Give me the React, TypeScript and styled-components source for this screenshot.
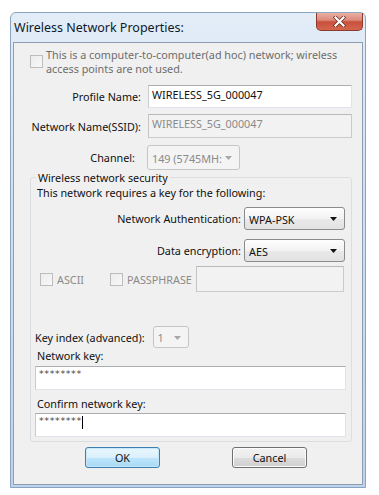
import React from 'react'
import styled, { createGlobalStyle } from 'styled-components'

const GlobalStyle = createGlobalStyle`
  html, body {
    margin: 0;
    padding: 0;
    background: #ffffff;
  }
  body {
    font-family: 'Noto Sans', 'Open Sans', sans-serif;
    font-size: 10.8px;
    color: #111;
  }
`

const Window = styled.div`
  margin: 12px 0 0 10px;
  width: 356px;
  height: 476px;
  box-sizing: border-box;
  border: 1px solid #8aa3bf;
  border-radius: 6px 6px 0 0;
  background: linear-gradient(180deg, #e3edf8 0%, #cfe0f2 40%, #bfd4ec 100%);
  padding: 0 2px 2px 2px;
  display: flex;
  flex-direction: column;
`

const TitleBar = styled.div`
  height: 29px;
  display: flex;
  justify-content: space-between;
  align-items: flex-start;
`

const Title = styled.div`
  align-self: center;
  padding-left: 1px;
  font-size: 12.5px;
  color: #0e1a2a;
`

const CloseButton = styled.div`
  width: 47px;
  height: 18px;
  box-sizing: border-box;
  border: 1px solid #8a3a2e;
  border-top: none;
  border-radius: 0 0 5px 5px;
  background: linear-gradient(180deg, #eab0a4 0%, #dc8a7a 42%, #c9503c 52%, #d4664e 100%);
  display: flex;
  align-items: center;
  justify-content: center;
`

const Client = styled.div`
  flex: 1;
  border: 1px solid #8d9db2;
  background: #f0f0f0;
  display: flex;
  flex-direction: column;
`

const AdHocRow = styled.div`
  margin-top: 5px;
  padding-left: 16px;
  display: flex;
  align-items: flex-start;
  gap: 3px;
  color: #6d6d6d;
  line-height: 14px;
`

const Check = styled.span<{ $top?: number }>`
  display: inline-block;
  flex: none;
  width: 13px;
  height: 13px;
  box-sizing: border-box;
  margin-top: ${(p) => p.$top ?? 0}px;
  border: 1px solid #bcbcbc;
  background: linear-gradient(135deg, #ececec, #f8f8f8);
`

const FieldRow = styled.div<{ $top: number; $gap: number }>`
  margin-top: ${(p) => p.$top}px;
  display: flex;
  align-items: center;
  gap: ${(p) => p.$gap}px;
`

const Label = styled.div<{ $width: number }>`
  width: ${(p) => p.$width}px;
  text-align: right;
  white-space: nowrap;
  flex: none;
`

const TextBox = styled.div<{ $width: number; $height: number; $disabled?: boolean }>`
  width: ${(p) => p.$width}px;
  height: ${(p) => p.$height}px;
  box-sizing: border-box;
  flex: none;
  border: 1px solid ${(p) => (p.$disabled ? '#c9cbcf' : '#e2e3ea')};
  border-top-color: ${(p) => (p.$disabled ? '#b7b9bd' : '#abadb3')};
  border-left-color: ${(p) => (p.$disabled ? '#c3c5c9' : '#c8cad0')};
  background: ${(p) => (p.$disabled ? '#f2f2f2' : '#ffffff')};
  color: ${(p) => (p.$disabled ? '#8a8a8a' : '#111')};
  padding: 2px 0 0 3px;
  line-height: 13px;
  white-space: nowrap;
  overflow: hidden;
`

const Secret = styled.span`
  font-family: 'DejaVu Sans', sans-serif;
  font-size: 9.5px;
  letter-spacing: 0.6px;
  color: #444;
  vertical-align: top;
  line-height: 10px;
`

const Caret = styled.span`
  display: inline-block;
  width: 1px;
  height: 13px;
  background: #000;
  vertical-align: top;
`

const Select = styled.div<{ $width: number; $height: number; $disabled?: boolean }>`
  width: ${(p) => p.$width}px;
  height: ${(p) => p.$height}px;
  box-sizing: border-box;
  flex: none;
  border: 1px solid ${(p) => (p.$disabled ? '#c3c5c8' : '#8a8b8d')};
  border-radius: 3px;
  background: ${(p) =>
    p.$disabled
      ? '#f4f4f4'
      : 'linear-gradient(180deg, #fdfdfd 0%, #f3f3f3 50%, #e9e9e9 51%, #e2e2e2 100%)'};
  color: ${(p) => (p.$disabled ? '#8a8a8a' : '#111')};
  display: flex;
  align-items: center;
  gap: 3px;
  padding: 1px 7px 0 4px;
  white-space: nowrap;
`

const SelectText = styled.span`
  flex: 1;
  min-width: 0;
  overflow: hidden;
`

const Group = styled.fieldset`
  margin: 1px 0 0 16px;
  width: 322px;
  box-sizing: border-box;
  padding: 0 0 4px 0;
  border: 1px solid #d9dee3;
  border-radius: 3px;
  display: flex;
  flex-direction: column;
  min-width: 0;
`

const Legend = styled.legend`
  margin-left: 5px;
  padding: 0 2px;
  line-height: 13px;
`

const Line = styled.div<{ $top: number; $left: number }>`
  margin-top: ${(p) => p.$top}px;
  padding-left: ${(p) => p.$left}px;
  line-height: 13px;
`

const RightRow = styled.div<{ $top: number }>`
  margin-top: ${(p) => p.$top}px;
  padding-right: 6px;
  display: flex;
  justify-content: flex-end;
  align-items: center;
  gap: 3px;
`

const OptionsRow = styled.div`
  margin-top: 4px;
  padding: 0 6px 0 9px;
  display: flex;
  align-items: center;
  color: #8a8a8a;
`

const OptionLabel = styled.span<{ $width: number }>`
  width: ${(p) => p.$width}px;
  padding-left: 4px;
  box-sizing: border-box;
  flex: none;
`

const LeftBlock = styled.div<{ $top: number; $gap?: number }>`
  margin-top: ${(p) => p.$top}px;
  padding-left: 4px;
  display: flex;
  align-items: center;
  gap: ${(p) => p.$gap ?? 0}px;
`

const Buttons = styled.div`
  margin-top: 5px;
  display: flex;
  padding-left: 71px;
  gap: 72px;
`

const Button = styled.div<{ $default?: boolean }>`
  width: 75px;
  height: 21px;
  box-sizing: border-box;
  border: 1px solid ${(p) => (p.$default ? '#3c7fb1' : '#707070')};
  border-radius: 3px;
  background: ${(p) =>
    p.$default
      ? 'linear-gradient(180deg, #eaf6fd 0%, #d9f0fc 50%, #bee6fd 51%, #a7d9f5 100%)'
      : 'linear-gradient(180deg, #f2f2f2 0%, #ebebeb 50%, #dddddd 51%, #cfcfcf 100%)'};
  box-shadow: inset 0 0 0 1px ${(p) => (p.$default ? '#c6e6f9' : '#fcfcfc')};
  display: flex;
  align-items: center;
  justify-content: center;
  color: #111;
`

const Arrow = ({ color }: { color: string }) => (
  <svg width="7" height="4" viewBox="0 0 7 4" style={{ flex: 'none' }}>
    <path d="M0 0h7L3.5 4z" fill={color} />
  </svg>
)

export default function App() {
  return (
    <>
      <GlobalStyle />
      <Window>
        <TitleBar>
          <Title>Wireless Network Properties:</Title>
          <CloseButton>
            <svg width="13" height="11" viewBox="0 0 13 11">
              <path d="M2.5 1.5l8 8M10.5 1.5l-8 8" stroke="#6b2418" strokeWidth="3.6" strokeLinecap="square" />
              <path d="M2.5 1.5l8 8M10.5 1.5l-8 8" stroke="#ffffff" strokeWidth="2.2" strokeLinecap="square" />
            </svg>
          </CloseButton>
        </TitleBar>
        <Client>
          <AdHocRow>
            <Check $top={7} />
            <div>
              This is a computer-to-computer(ad hoc) network; wireless
              <br />
              access points are not used.
            </div>
          </AdHocRow>

          <FieldRow $top={9} $gap={7}>
            <Label $width={127}>Profile Name:</Label>
            <TextBox $width={204} $height={23}>WIRELESS_5G_000047</TextBox>
          </FieldRow>
          <FieldRow $top={6} $gap={7}>
            <Label $width={127}>Network Name(SSID):</Label>
            <TextBox $width={204} $height={24} $disabled>
              WIRELESS_5G_000047
            </TextBox>
          </FieldRow>
          <FieldRow $top={7} $gap={12}>
            <Label $width={121}>Channel:</Label>
            <Select $width={93} $height={25} $disabled>
              <SelectText>149 (5745MH:</SelectText>
              <Arrow color="#a8a8a8" />
            </Select>
          </FieldRow>

          <Group>
            <Legend>Wireless network security</Legend>
            <Line $top={2} $left={6}>
              This network requires a key for the following:
            </Line>
            <RightRow $top={8}>
              <span>Network Authentication:</span>
              <Select $width={101} $height={23}>
                <SelectText>WPA-PSK</SelectText>
                <Arrow color="#111" />
              </Select>
            </RightRow>
            <RightRow $top={9}>
              <span>Data encryption:</span>
              <Select $width={101} $height={23}>
                <SelectText>AES</SelectText>
                <Arrow color="#111" />
              </Select>
            </RightRow>
            <OptionsRow>
              <Check />
              <OptionLabel $width={57}>ASCII</OptionLabel>
              <Check />
              <OptionLabel $width={73}>PASSPHRASE</OptionLabel>
              <TextBox $width={148} $height={26} $disabled />
            </OptionsRow>
            <LeftBlock $top={34} $gap={8}>
              <span>Key index (advanced):</span>
              <Select $width={36} $height={22} $disabled>
                <SelectText>1</SelectText>
                <Arrow color="#a8a8a8" />
              </Select>
            </LeftBlock>
            <Line $top={1} $left={6}>
              Network key:
            </Line>
            <LeftBlock $top={4}>
              <TextBox $width={311} $height={24}>
                <Secret>********</Secret>
              </TextBox>
            </LeftBlock>
            <Line $top={7} $left={6}>
              Confirm network key:
            </Line>
            <LeftBlock $top={3}>
              <TextBox $width={311} $height={24}>
                <Secret>********</Secret>
                <Caret />
              </TextBox>
            </LeftBlock>
          </Group>

          <Buttons>
            <Button $default>OK</Button>
            <Button>Cancel</Button>
          </Buttons>
        </Client>
      </Window>
    </>
  )
}
